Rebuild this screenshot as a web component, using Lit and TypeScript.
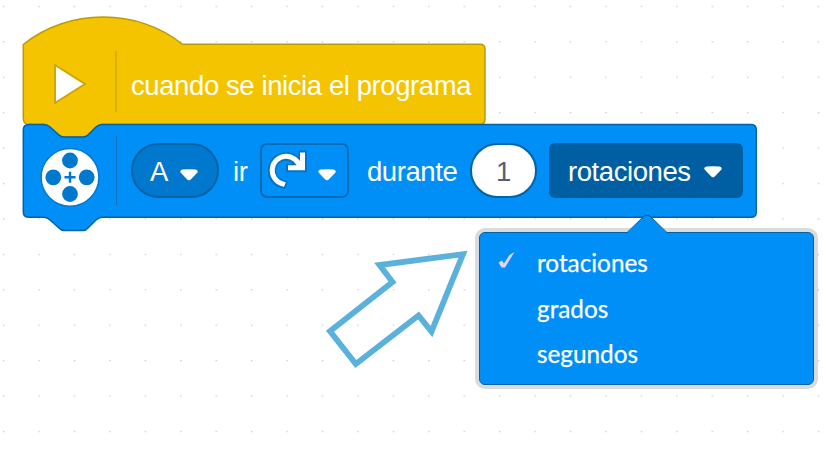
import { LitElement, html, css, svg } from "lit";
import { customElement } from "lit/decorators.js";

const caret = html`<svg class="caret" width="18" height="12" viewBox="0 0 18 12">
  <path d="M2.500 .5Q9 -.1 15.500 .5Q18.600 1.200 17.400 3.600L10.800 10.600Q9 12.200 7.200 10.600L.6 3.600Q-.6 1.200 2.500 .5Z" fill="#fff" />
</svg>`;

@customElement("hat-block")
class HatBlock extends LitElement {
  static styles = css`
    :host { display: block; position: relative; width: 464px; height: 122px; font: 27.5px "Liberation Sans", Arial, sans-serif; color: #fff; }
    .shape { position: absolute; left: 0; top: 0; }
    .row { position: relative; display: flex; align-items: center; height: 80px; padding: 29px 0 0 31px; }
    .play { flex: none; width: 34px; height: 44px; }
    .rule { width: 2px; height: 61px; background: #d9b002; margin: -6px 14px 0 28px; }
    .label { white-space: nowrap; line-height: 30px; margin-top: 3px; letter-spacing: -.41px; }
  `;
  render() {
    return html`
      <svg class="shape" width="464" height="124" viewBox="22 15 464 124">
        <path d="M23.3 44.500C68 8 138 8 182.500 44.300H480Q485 44.300 485 49.500V119Q485 124.500 480 124.500H102Q99 124.500 96 127L88 135Q86 137 83 137H64Q61 137 59 135L50 127Q47 124.500 44 124.500H29Q23.300 124.500 23.300 118Z" fill="#f5c400" stroke="#b99b08" stroke-width="1.5" />
      </svg>
      <div class="row">
        <svg class="play" viewBox="0 0 34 44"><path d="M2 3L32 22L2 41Z" fill="#fff" stroke="#d0a600" stroke-width="2" /></svg>
        <div class="rule"></div>
        <div class="label">cuando se inicia el programa</div>
      </div>`;
  }
}

@customElement("motor-block")
class MotorBlock extends LitElement {
  static styles = css`
    :host { display: block; position: relative; width: 736px; height: 109px; font: 27.5px/30px "Liberation Sans", Arial, sans-serif; letter-spacing: -.43px; color: #fff; }
    .shape { position: absolute; left: 0; top: 0; }
    .row { position: relative; display: flex; align-items: center; height: 95px; padding-left: 18px; }
    .row > * { box-sizing: border-box; flex: none; }
    .caret { flex: none; display: block; }
    .reel { margin-top: 12px; }
    .rule { width: 1px; height: 69px; background: #0072c0; margin: 0 14px 0 16px; }
    .field { display: flex; align-items: center; height: 55px; border: 2px solid #0063a6; }
    .field span { padding-top: 2px; }
    .port { width: 88px; border-radius: 28px; background: #0078cd; padding-left: 17px; gap: 12px; }
    .port .caret { margin-top: 9px; }
    .ir { width: 41px; padding: 2px 0 0 14px; }
    .turn { width: 89px; border-radius: 7px; padding-left: 6px; gap: 4px; border-color: #006bb5; }
    .turn .caret { margin-top: 8px; margin-left: 4px; }
    .during { width: 121px; padding: 2px 0 0 18px; }
    .number { width: 67px; border-radius: 28px; background: #fff; color: #575e75; justify-content: center; }
    .unit { width: 194px; margin-left: 12px; border: 0; border-radius: 6px; background: #005fa2; padding-left: 19px; gap: 13px; }
    .unit .caret { margin-top: 3px; }
  `;
  render() {
    const holes = [[30, 13.5], [13.3, 30.3], [46.7, 30.3], [30, 47]];
    return html`
      <svg class="shape" width="736" height="109" viewBox="22 123 736 109">
        <path d="M23.300 130Q23.300 124.500 29 124.500H44Q47 124.500 50 127L59 135Q61 137 64 137H83Q86 137 88 135L96 127Q99 124.500 102 124.500H751Q756.300 124.500 756.300 130V212Q756.300 217.300 751 217.300H102Q99 217.300 96 220L88 228Q86 230.400 83 230.400H64Q61 230.400 59 228L50 220Q47 217.300 44 217.300H29Q23.300 217.300 23.300 212Z" fill="#008ff7" stroke="#0063a6" stroke-width="1.5" />
      </svg>
      <div class="row">
        <svg class="reel" width="60" height="60" viewBox="0 0 60 60">
          <circle cx="30" cy="30.300" r="28.900" fill="#fff" stroke="#007ad0" stroke-width="1.500" />
          ${holes.map(([x, y]) => svg`<circle cx=${x} cy=${y} r="7.900" fill="#0078cd" />`)}
          <path d="M24.500 30.300H35.500M30 24.800V35.800" stroke="#0078cd" stroke-width="2.400" />
        </svg>
        <div class="rule"></div>
        <div class="field port"><span>A</span>${caret}</div>
        <div class="ir">ir</div>
        <div class="field turn">
          <svg width="42" height="42" viewBox="0 0 42 42">
            <g fill="none">
              <path d="M12.800 37.500L14.300 34A14 14 0 1 1 31.500 17.500M34.500 .5V18H18" stroke="#0074c4" stroke-width="8.500" />
              <path d="M13.600 36L14.500 33.800A14 14 0 1 1 32 18M34.500 2.500V17.700H20" stroke="#fff" stroke-width="5" />
            </g>
          </svg>${caret}
        </div>
        <div class="during">durante</div>
        <div class="field number"><span>1</span></div>
        <div class="field unit"><span>rotaciones</span>${caret}</div>
      </div>`;
  }
}

@customElement("unit-menu")
class UnitMenu extends LitElement {
  static styles = css`
    :host { display: block; position: relative; box-sizing: border-box; width: 335px; height: 153px; padding-top: 7px; background: #008ff7; border: 1.5px solid #0063a6; border-radius: 6px; box-shadow: 0 0 0 4px #dadcdb; color: #fff; font: 24.3px/45.500px Lato, "Open Sans", sans-serif; }
    .tip { position: absolute; left: 145px; top: -19px; }
    .item { display: grid; grid-template-columns: 57px 1fr; height: 45.500px; }
    .item span { -webkit-text-stroke: .25px #fff; }
    .mark { margin: 11px 0 0 17px; }
  `;
  render() {
    return html`
      <svg class="tip" width="44" height="21" viewBox="0 0 44 21">
        <path d="M2 19L18 3Q22-.8 26 3L42 19V21H2Z" fill="#008ff7" />
        <path d="M2 18.500L18 3Q22-.8 26 3L42 18.500" fill="none" stroke="#0063a6" />
      </svg>
      ${["rotaciones", "grados", "segundos"].map((label, i) => html`
        <div class="item">
          ${i === 0
            ? html`<svg class="mark" width="20" height="20" viewBox="0 0 20 20"><path d="M1.500 11.500L5 9.500L7 12.500L12.500 4L17.500 1L8 16.500H4.500Z" fill="#e4d2f0" /></svg>`
            : html`<span></span>`}
          <span>${label}</span>
        </div>`)}`;
  }
}

@customElement("app-root")
class AppRoot extends LitElement {
  static styles = css`
    :host { display: block; position: relative; width: 827px; height: 451px; overflow: hidden; background: #fff; }
    .grid { position: absolute; inset: 0; display: block; }
    hat-block { position: absolute; left: 22px; top: 15px; }
    motor-block { position: absolute; left: 22px; top: 123px; }
    unit-menu { position: absolute; left: 479px; top: 232px; }
    .arrow { position: absolute; left: 320px; top: 245px; }
  `;
  render() {
    return html`
      <svg class="grid" width="827" height="451">
        <defs><pattern id="dots" x="3" y="5.700" width="35.430" height="35.430" patternUnits="userSpaceOnUse"><rect width="1.300" height="1.300" fill="#c8c8c8" /></pattern></defs>
        <rect width="827" height="451" fill="url(#dots)" />
      </svg>
      <hat-block></hat-block>
      <motor-block></motor-block>
      <svg class="arrow" width="155" height="130" viewBox="320 245 155 130">
        <path d="M330 331.200L355.800 364L418.500 315.500L431.500 331.500L463 254.200L379.500 265L392.500 282Z" fill="none" stroke="#5ab1dc" stroke-width="5.800" />
      </svg>
      <unit-menu></unit-menu>`;
  }
}
